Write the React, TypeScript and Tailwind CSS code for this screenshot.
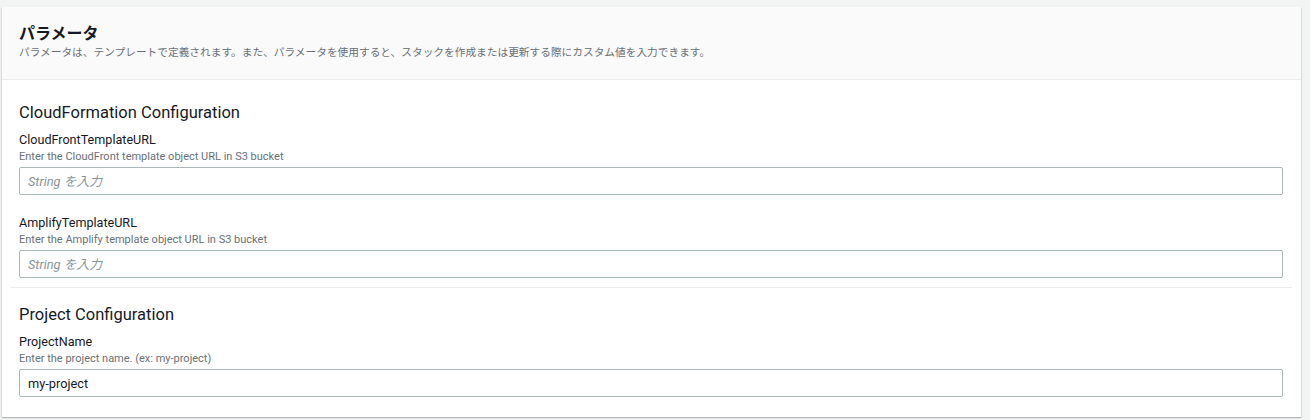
import React from "react";

const FONT = "font-['Roboto','Noto_Sans_CJK_JP',sans-serif]";

interface FieldProps {
  label: string;
  description: string;
  value?: string;
  placeholder?: string;
}

function Field({ label, description, value, placeholder }: FieldProps) {
  return (
    <div className="flex flex-col">
      <label className="text-[12.6px] leading-[16px] text-[#16191f]">{label}</label>
      <p className="mt-[1.5px] text-[11px] leading-[14px] text-[#687078]">{description}</p>
      <input
        readOnly
        defaultValue={value}
        placeholder={placeholder}
        className="mt-[3.5px] h-[28px] w-full rounded-[2px] border border-[#aab7b8] bg-white px-[8px] text-[12.8px] text-[#16191f] outline-none placeholder:italic placeholder:text-[#879596]"
      />
    </div>
  );
}

export default function App() {
  return (
    <div className={`min-h-[420px] bg-[#f2f3f3] pl-[2px] pr-[9px] pt-[7px] ${FONT}`}>
      <div className="bg-white shadow-[0_1px_1px_0_rgba(0,28,36,0.15),1px_1px_1px_0_rgba(0,28,36,0.08),-1px_1px_1px_0_rgba(0,28,36,0.08)]">
        <div className="h-[73px] border-b border-[#eaeded] bg-[#fafafa] px-[17px] pt-[16.5px]">
          <h2 className="text-[16px] font-bold leading-[20px] text-[#16191f]">パラメータ</h2>
          <p className="mt-[2.5px] text-[10.7px] leading-[14px] text-[#687078]">
            パラメータは、テンプレートで定義されます。また、パラメータを使用すると、スタックを作成または更新する際にカスタム値を入力できます。
          </p>
        </div>

        <section className="mx-[8px] mr-[9px] border-b border-[#eaeded] px-[9px] pb-[9px] pt-[23px]">
          <h3 className="text-[16.5px] leading-[20px] text-[#16191f]">CloudFormation Configuration</h3>
          <div className="mt-[9px] flex flex-col gap-[20px]">
            <Field
              label="CloudFrontTemplateURL"
              description="Enter the CloudFront template object URL in S3 bucket"
              placeholder="String を入力"
            />
            <Field
              label="AmplifyTemplateURL"
              description="Enter the Amplify template object URL in S3 bucket"
              placeholder="String を入力"
            />
          </div>
        </section>

        <section className="mx-[8px] mr-[9px] px-[9px] pb-[20px] pt-[17px]">
          <h3 className="text-[16.5px] leading-[20px] text-[#16191f]">Project Configuration</h3>
          <div className="mt-[9px] flex flex-col">
            <Field
              label="ProjectName"
              description="Enter the project name. (ex: my-project)"
              value="my-project"
            />
          </div>
        </section>
      </div>
    </div>
  );
}
